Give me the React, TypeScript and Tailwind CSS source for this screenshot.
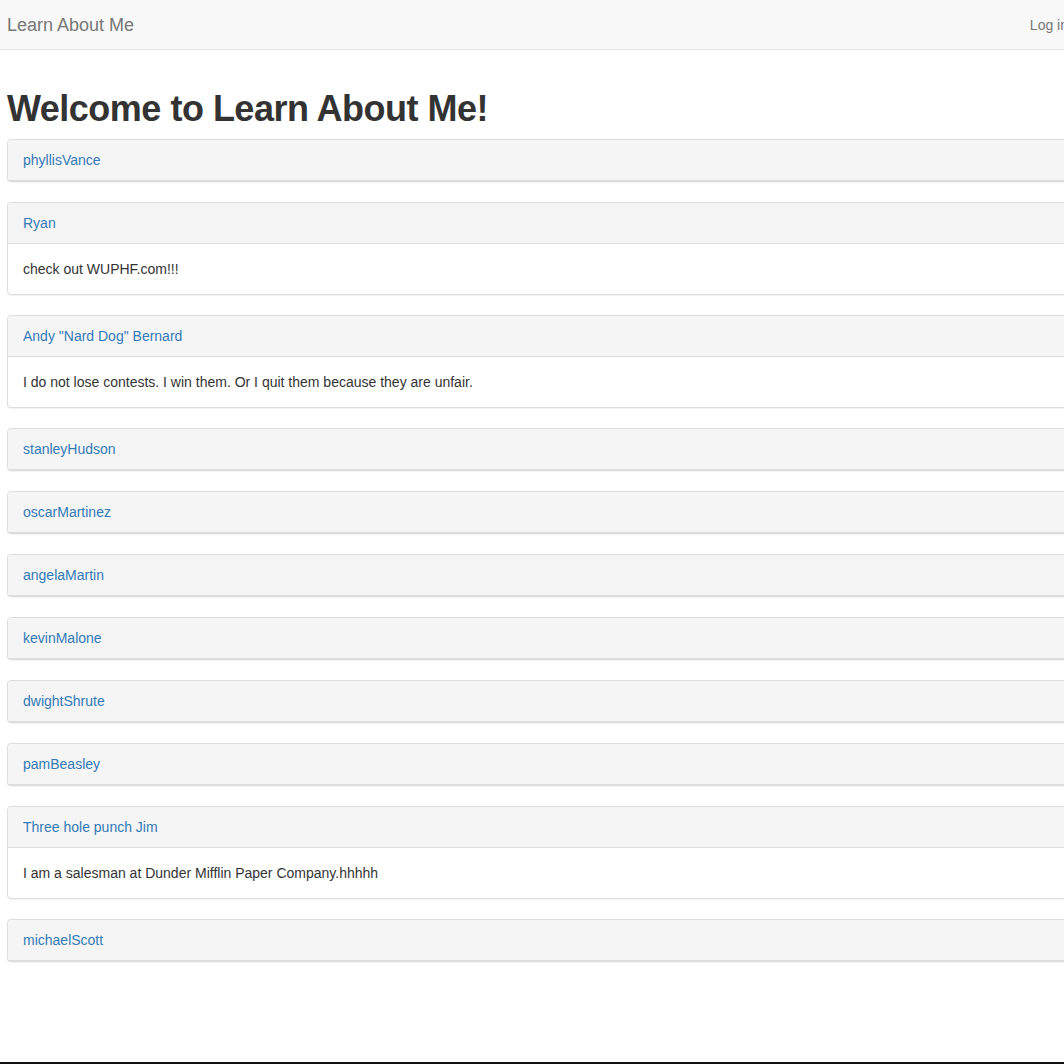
import React from "react";

type Item = { name: string; body?: string };

const items: Item[] = [
  { name: "phyllisVance" },
  { name: "Ryan", body: "check out WUPHF.com!!!" },
  {
    name: 'Andy "Nard Dog" Bernard',
    body: "I do not lose contests. I win them. Or I quit them because they are unfair.",
  },
  { name: "stanleyHudson" },
  { name: "oscarMartinez" },
  { name: "angelaMartin" },
  { name: "kevinMalone" },
  { name: "dwightShrute" },
  { name: "pamBeasley" },
  { name: "Three hole punch Jim", body: "I am a salesman at Dunder Mifflin Paper Company.hhhhh" },
  { name: "michaelScott" },
];

export default function App() {
  return (
    <div
      className="w-[1064px] h-[1064px] overflow-hidden flex flex-col bg-white text-[#333] text-[14px] leading-[20px]"
      style={{ fontFamily: '"Liberation Sans", Arial, sans-serif' }}
    >
      <div className="w-[1120px] shrink-0 h-[50px] bg-[#f8f8f8] border-b border-[#e7e7e7] flex items-center justify-between pl-[7px] pr-[52px]">
        <a className="text-[18px] leading-[20px] text-[#777]">Learn About Me</a>
        <a className="text-[14px] leading-[20px] text-[#777]">Log in</a>
      </div>
      <div className="w-[1120px] pl-[7px] shrink-0">
        <h1 className="mt-[39px] mb-[10px] text-[36px] leading-[39.6px] font-bold tracking-[-0.5px] text-[#333]">
          Welcome to Learn About Me!
        </h1>
        <div className="flex flex-col gap-[20px]">
          {items.map((it) => (
            <div
              key={it.name}
              className="border border-[#ddd] rounded-[4px] bg-white shadow-[0_1px_1px_rgba(0,0,0,0.05)]"
            >
              <div className="bg-[#f5f5f5] border-b border-[#ddd] rounded-t-[3px] px-[15px] py-[10px]">
                <a className="text-[#337ab7]">{it.name}</a>
              </div>
              {it.body && <div className="p-[15px]">{it.body}</div>}
            </div>
          ))}
        </div>
      </div>
      <div className="flex-1" />
      <div className="h-[2px] w-full bg-[#111] shrink-0" />
    </div>
  );
}
